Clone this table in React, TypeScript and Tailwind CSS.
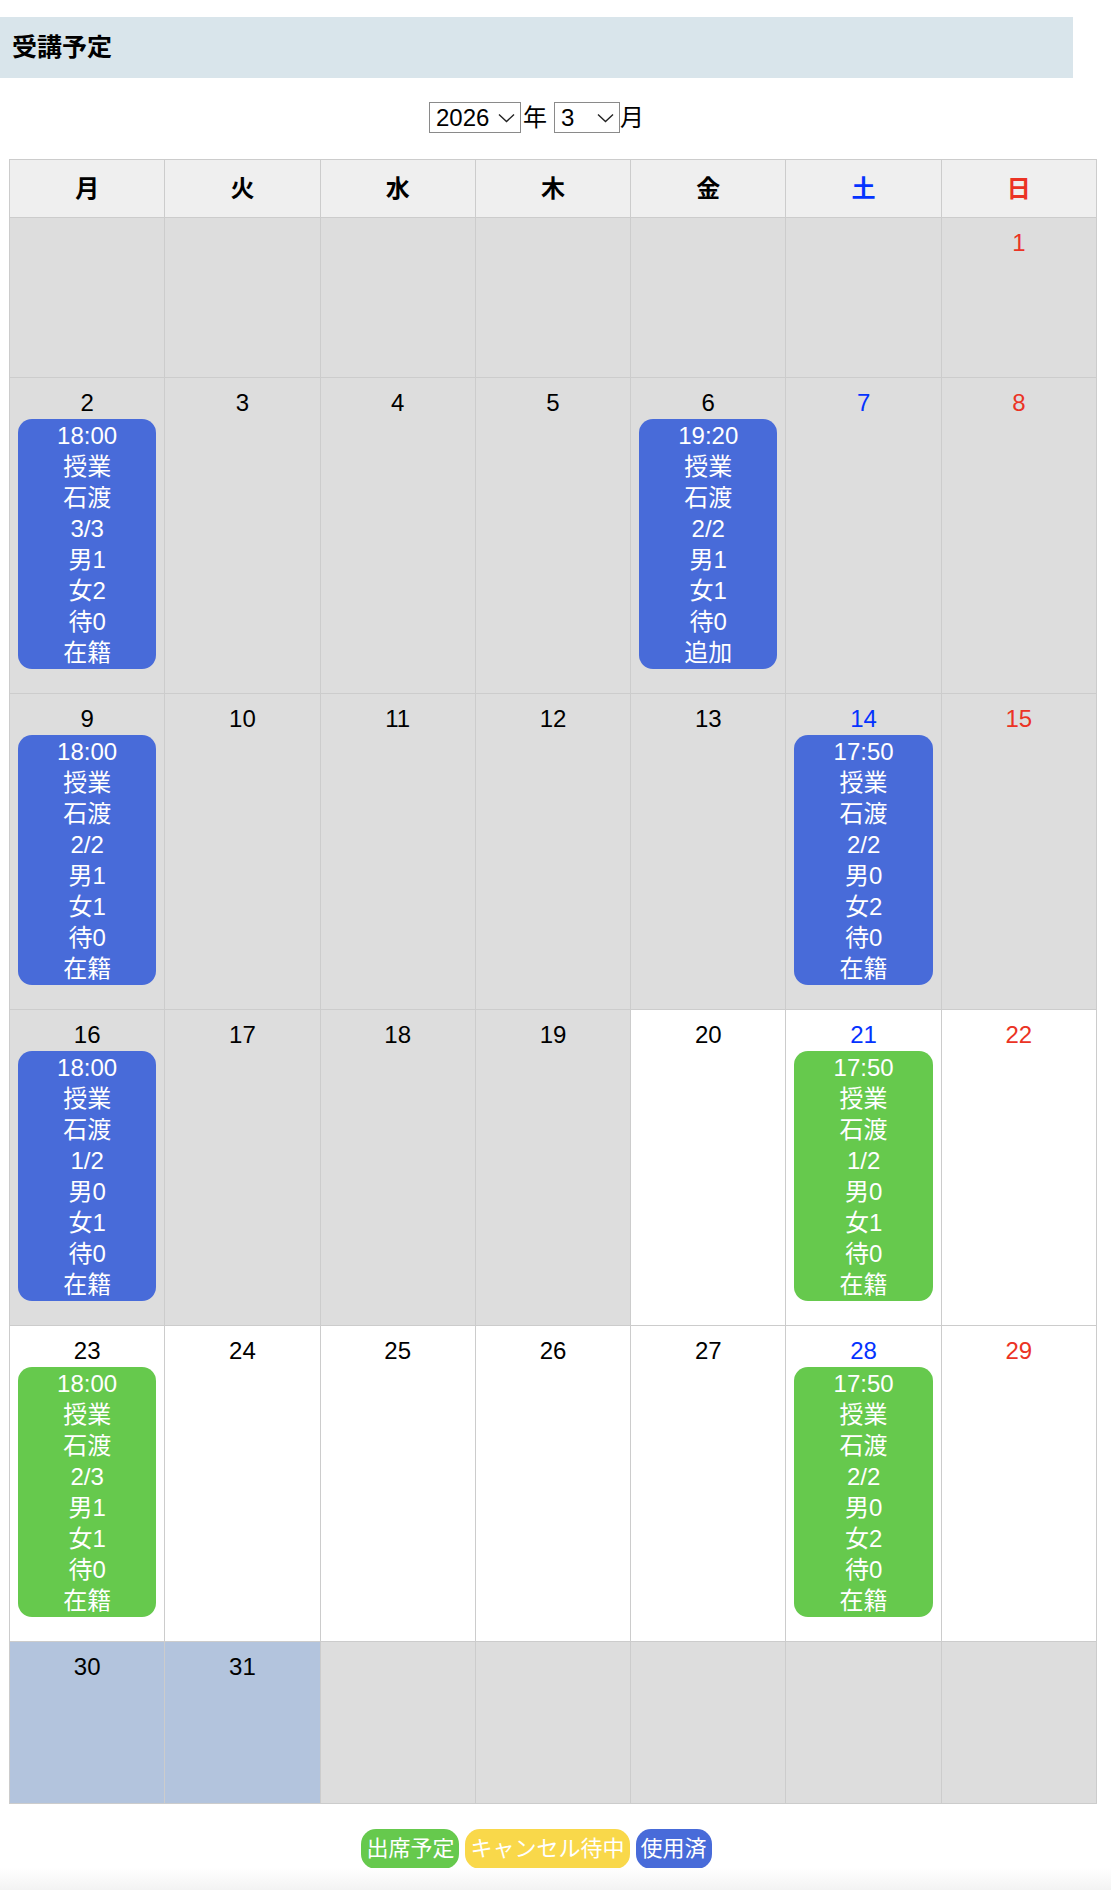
import { useState } from 'react'

type Tone = 'plan' | 'used'

interface Lesson {
  time: string
  kind: string
  teacher: string
  seats: string
  male: number
  female: number
  waiting: number
  status: string
  tone: Tone
}

const lessons: Record<number, Lesson> = {
  2: { time: '18:00', kind: '授業', teacher: '石渡', seats: '3/3', male: 1, female: 2, waiting: 0, status: '在籍', tone: 'used' },
  6: { time: '19:20', kind: '授業', teacher: '石渡', seats: '2/2', male: 1, female: 1, waiting: 0, status: '追加', tone: 'used' },
  9: { time: '18:00', kind: '授業', teacher: '石渡', seats: '2/2', male: 1, female: 1, waiting: 0, status: '在籍', tone: 'used' },
  14: { time: '17:50', kind: '授業', teacher: '石渡', seats: '2/2', male: 0, female: 2, waiting: 0, status: '在籍', tone: 'used' },
  16: { time: '18:00', kind: '授業', teacher: '石渡', seats: '1/2', male: 0, female: 1, waiting: 0, status: '在籍', tone: 'used' },
  21: { time: '17:50', kind: '授業', teacher: '石渡', seats: '1/2', male: 0, female: 1, waiting: 0, status: '在籍', tone: 'plan' },
  23: { time: '18:00', kind: '授業', teacher: '石渡', seats: '2/3', male: 1, female: 1, waiting: 0, status: '在籍', tone: 'plan' },
  28: { time: '17:50', kind: '授業', teacher: '石渡', seats: '2/2', male: 0, female: 2, waiting: 0, status: '在籍', tone: 'plan' },
}

const weekdays = ['月', '火', '水', '木', '金', '土', '日']

// March 2026 starts on a Sunday; week begins Monday
const cells: (number | null)[] = [
  ...Array(6).fill(null),
  ...Array.from({ length: 31 }, (_, i) => i + 1),
  ...Array(5).fill(null),
]

const weeks: (number | null)[][] = []
for (let i = 0; i < cells.length; i += 7) weeks.push(cells.slice(i, i + 7))

const TODAY = 20

const dayColor = (col: number) =>
  col === 5 ? 'text-[#0433ff]' : col === 6 ? 'text-[#eb3324]' : 'text-black'

const cellBg = (day: number | null) => {
  if (day === null) return 'bg-[#dddddd]'
  if (day < TODAY) return 'bg-[#dddddd]'
  if (day >= 30) return 'bg-[#b3c4dd]'
  return 'bg-white'
}

const Chevron = () => (
  <svg
    className="pointer-events-none absolute top-1/2 right-[6px] -translate-y-1/2"
    width="17"
    height="10"
    viewBox="0 0 17 10"
    fill="none"
  >
    <polyline points="1,1.5 8.5,8.5 16,1.5" stroke="#222" strokeWidth="1.4" />
  </svg>
)

const LessonBadge = ({ lesson }: { lesson: Lesson }) => (
  <div
    className={`mx-2 rounded-[14px] py-[1px] text-center text-[24px] leading-[31px] text-white ${
      lesson.tone === 'used' ? 'bg-[#486bd9]' : 'bg-[#66c94d]'
    }`}
  >
    <div>{lesson.time}</div>
    <div>{lesson.kind}</div>
    <div>{lesson.teacher}</div>
    <div>{lesson.seats}</div>
    <div>男{lesson.male}</div>
    <div>女{lesson.female}</div>
    <div>待{lesson.waiting}</div>
    <div>{lesson.status}</div>
  </div>
)

export default function App() {
  const [year, setYear] = useState('2026')
  const [month, setMonth] = useState('3')

  return (
    <div
      className="relative min-h-[1890px] bg-white text-black"
      style={{ fontFamily: '"Liberation Sans", "Noto Sans CJK JP", sans-serif' }}
    >
      <div className="pt-[17px]">
        <h2 className="flex h-[61px] w-[1073px] items-center bg-[#d9e5eb] pl-[12px] text-[25px] font-bold">
          受講予定
        </h2>

        <div className="mt-[24px] flex h-[31px] w-[1073px] items-center justify-center text-[24px]">
          <div className="relative">
            <select
              value={year}
              onChange={e => setYear(e.target.value)}
              className="h-[31px] w-[92px] appearance-none rounded-none border border-[#8a8a8a] bg-white pl-[6px] text-[24px] leading-[29px]"
            >
              <option value="2025">2025</option>
              <option value="2026">2026</option>
              <option value="2027">2027</option>
            </select>
            <Chevron />
          </div>
          <span className="ml-[2px]">年</span>
          <div className="relative ml-[7px]">
            <select
              value={month}
              onChange={e => setMonth(e.target.value)}
              className="h-[31px] w-[66px] appearance-none rounded-none border border-[#8a8a8a] bg-white pl-[6px] text-[24px] leading-[29px]"
            >
              {Array.from({ length: 12 }, (_, i) => (
                <option key={i} value={String(i + 1)}>
                  {i + 1}
                </option>
              ))}
            </select>
            <Chevron />
          </div>
          <span>月</span>
        </div>

        <div className="mt-[26px] ml-[9px] grid w-[1088px] grid-cols-7 border-t border-l border-[#cccccc]">
          {weekdays.map((w, col) => (
            <div
              key={w}
              className={`flex h-[58px] items-center justify-center border-r border-b border-[#cccccc] bg-[#efefef] text-[24px] font-bold ${dayColor(col)}`}
            >
              {w}
            </div>
          ))}
          {weeks.map((week, wi) =>
            week.map((day, col) => {
              const lesson = day ? lessons[day] : undefined
              const last = wi === weeks.length - 1
              return (
                <div
                  key={`${wi}-${col}`}
                  className={`border-r border-b border-[#cccccc] pt-[9px] ${
                    last ? 'min-h-[162px]' : 'min-h-[160px]'
                  } ${lesson ? 'pb-[24px]' : ''} ${cellBg(day)}`}
                >
                  {day && (
                    <div className={`h-[32px] text-center text-[24px] leading-[32px] ${dayColor(col)}`}>{day}</div>
                  )}
                  {lesson && <LessonBadge lesson={lesson} />}
                </div>
              )
            })
          )}
        </div>

        <div className="mt-[25px] flex w-[1073px] justify-center gap-[6px] text-[22px] text-white">
          <span className="h-[40px] rounded-[15px] bg-[#66c94d] px-[5px] leading-[40px]">出席予定</span>
          <span className="h-[40px] rounded-[15px] bg-[#f9d84a] px-[5px] leading-[40px]">キャンセル待中</span>
          <span className="h-[40px] rounded-[15px] bg-[#486bd9] px-[5px] leading-[40px]">使用済</span>
        </div>
      </div>
      <div className="absolute right-0 bottom-0 left-0 h-[22px] bg-gradient-to-b from-white to-[#f3f3f3]" />
    </div>
  )
}
